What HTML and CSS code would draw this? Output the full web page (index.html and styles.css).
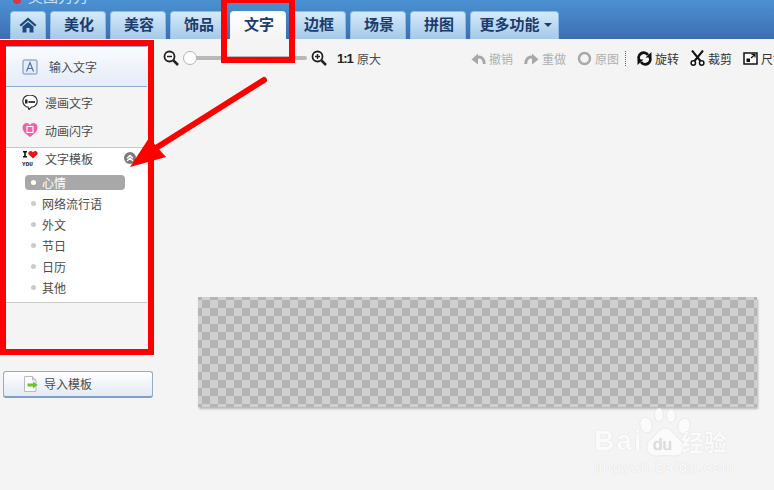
FILE: index.html
```html
<!DOCTYPE html>
<html lang="zh-CN">
<head>
    <meta charset="UTF-8">
    <title>美图秀秀</title>
    <link rel="stylesheet" href="styles.css">
</head>

<body>

<div class="app-container">
    <div class="header">
        <div class="app-title">
            <svg class="app-logo" width="10" height="4" viewBox="0 0 10 4"><circle cx="5" cy="0" r="4" fill="#d8344c"/></svg>
            <span class="app-name">美图秀秀</span>
        </div>
        <div class="tabs">
            <button class="tab tab-home">
                <svg width="18" height="16" viewBox="0 0 18 16"><path d="M9 0.5 0.5 8 2 9.5 9 3.5 16 9.500 17.500 8Z" fill="#1c4a7c"/><path d="M3.500 9.500 9 5l5.500 4.500V15.500H10.500V11h-3v4.500H3.500Z" fill="#1c4a7c"/></svg>
            </button>
            <button class="tab">美化</button>
            <button class="tab">美容</button>
            <button class="tab">饰品</button>
            <button class="tab active">文字</button>
            <button class="tab">边框</button>
            <button class="tab">场景</button>
            <button class="tab">拼图</button>
            <button class="tab tab-more">更多功能<i class="caret"></i></button>
        </div>
    </div>

    <div class="workspace">
        <div class="side">
            <div class="side-panel">
                <div class="side-main">
                    <svg width="16" height="16" viewBox="0 0 16 16"><rect x="1" y="1" width="14" height="14" rx="1" fill="#e6edf8" stroke="#6f8fc4"/><path d="M4.500 12.500 8 3.500l3.500 9M5.800 9.500h4.400" fill="none" stroke="#4a6fb0" stroke-width="1.100"/></svg>
                    <span>输入文字</span>
                </div>
                <div class="side-group">
                    <div class="side-item">
                        <svg width="16" height="16" viewBox="0 0 16 16"><path d="M8 1C3.800 1 .8 3.500 .8 7S3.800 13 6 13l1 2.500L9.500 13c3 0 5.700-2.500 5.700-6S12.200 1 8 1Z" fill="#fff" stroke="#333" stroke-width="1.200"/><rect x="3" y="5.500" width="2.500" height="4" fill="#222"/><rect x="6.500" y="7" width="6.500" height="2" fill="#444"/></svg>
                        <span>漫画文字</span>
                    </div>
                    <div class="side-item">
                        <svg width="16" height="16" viewBox="0 0 16 16"><path d="M8 15C4 12 .5 9.500 .5 5.500 .5 2.800 2.500 1 4.500 1 6 1 7.300 1.800 8 3 8.700 1.800 10 1 11.500 1c2 0 4 1.800 4 4.500C15.500 9.500 12 12 8 15Z" fill="#f45fa8"/><rect x="5" y="4.500" width="6" height="6" fill="none" stroke="#fff" stroke-width="1.100"/></svg>
                        <span>动画闪字</span>
                    </div>
                </div>
                <div class="side-group side-templates">
                    <div class="side-item side-head">
                        <svg width="16" height="16" viewBox="0 0 16 16"><rect x="1" y="0" width="4" height="1.500" fill="#111"/><rect x="2.200" y="0" width="1.600" height="6" fill="#111"/><rect x="1" y="5" width="4" height="1.500" fill="#111"/><path d="M11 7.500 6.800 3.400C5.600 1.800 7 0 8.500 0 9.700 0 10.500 .6 11 1.400 11.500 .6 12.300 0 13.500 0 15 0 16.400 1.800 15.200 3.400Z" fill="#e8141c"/><text x="0" y="15" class="you-text">YOU</text></svg>
                        <span>文字模板</span>
                        <i class="collapse">
                            <svg width="12" height="12" viewBox="0 0 12 12"><circle cx="6" cy="6" r="6" fill="#7b7b7b"/><path d="M3 6.200 6 3.400 9 6.200M3 9 6 6.200 9 9" fill="none" stroke="#fff" stroke-width="1.300"/></svg>
                        </i>
                    </div>
                    <ul class="template-list">
                        <li class="selected">心情</li>
                        <li>网络流行语</li>
                        <li>外文</li>
                        <li>节日</li>
                        <li>日历</li>
                        <li>其他</li>
                    </ul>
                </div>
            </div>
            <button class="import-btn">
                <svg width="16" height="16" viewBox="0 0 16 16"><path d="M1.500 .5H9.500L13 4V15.500H1.500Z" fill="#fafafa" stroke="#bbb"/><path d="M9.500 .5V4H13" fill="#ddd" stroke="#bbb"/><path d="M4.500 7.500H10V5.500L14.500 9 10 12.500V10.500H4.500Z" fill="#6cc22e"/></svg>
                <span>导入模板</span>
            </button>
        </div>

        <div class="main">
            <div class="toolbar">
                <div class="zoom-tools">
                    <svg width="16" height="16" viewBox="0 0 16 16"><circle cx="6.500" cy="6.500" r="5" fill="#fff" stroke="#222" stroke-width="1.800"/><path d="M4 6.500H9" stroke="#222" stroke-width="1.500"/><path d="M10.500 10.500 15 15" stroke="#222" stroke-width="2.500"/></svg>
                    <div class="slider"><i class="slider-knob"></i></div>
                    <svg width="16" height="16" viewBox="0 0 16 16"><circle cx="6.500" cy="6.500" r="5" fill="#fff" stroke="#222" stroke-width="1.800"/><path d="M4 6.500H9M6.500 4V9" stroke="#222" stroke-width="1.500"/><path d="M10.500 10.500 15 15" stroke="#222" stroke-width="2.500"/></svg>
                    <b class="one-to-one">1:1</b>
                    <span class="tool-text">原大</span>
                </div>
                <div class="edit-tools">
                    <div class="tool disabled">
                        <svg width="15" height="15" viewBox="0 0 15 15"><path d="M.5 8.500 7 2.500V13.500Z" fill="#a8a8a8"/><path d="M6 6.500C10.500 5 13.300 8 13.300 13" fill="none" stroke="#a8a8a8" stroke-width="3"/></svg>
                        <span>撤销</span>
                    </div>
                    <div class="tool disabled">
                        <svg width="15" height="15" viewBox="0 0 15 15"><path d="M14.500 8.500 8 2.500V13.500Z" fill="#a8a8a8"/><path d="M9 6.500C4.500 5 1.700 8 1.700 13" fill="none" stroke="#a8a8a8" stroke-width="3"/></svg>
                        <span>重做</span>
                    </div>
                    <div class="tool disabled">
                        <svg width="15" height="15" viewBox="0 0 15 15"><circle cx="7.500" cy="7.500" r="5.500" fill="none" stroke="#a8a8a8" stroke-width="2.500"/></svg>
                        <span>原图</span>
                    </div>
                    <i class="tool-sep"></i>
                    <div class="tool">
                        <svg width="15" height="15" viewBox="0 0 15 15"><path d="M2.500 9.500A5 5 0 0 1 11 4M12.500 5.500A5 5 0 0 1 4 11" fill="none" stroke="#111" stroke-width="2.800"/><path d="M8.500 6.500H14.500V1ZM6.500 8.500H.5V14Z" fill="#111"/></svg>
                        <span>旋转</span>
                    </div>
                    <div class="tool">
                        <svg width="15" height="16" viewBox="0 0 15 16"><path d="M2 .5 10.500 11M13 .5 4.500 11" stroke="#111" stroke-width="2"/><circle cx="3.300" cy="13" r="2.200" fill="#fff" stroke="#111" stroke-width="1.500"/><circle cx="11.700" cy="13" r="2.200" fill="#fff" stroke="#111" stroke-width="1.500"/></svg>
                        <span>裁剪</span>
                    </div>
                    <div class="tool">
                        <svg width="15" height="15" viewBox="0 0 15 15"><rect x="1" y="2" width="13" height="11" fill="#fff" stroke="#111" stroke-width="1.500"/><rect x="3.500" y="7.500" width="3.500" height="3.500" fill="#111"/><path d="M8 7 12 3.500M8.500 3.500H12V6.500" fill="none" stroke="#111" stroke-width="1.200"/></svg>
                        <span>尺寸</span>
                    </div>
                </div>
            </div>
            <div class="canvas-area">
                <div class="canvas"></div>
            </div>
        </div>
    </div>

    <!-- annotation marks drawn on top of the screenshot -->
    <svg class="marks" width="774" height="490" viewBox="0 0 774 490">
        <rect x="3" y="43" width="148" height="309" fill="none" stroke="#ff0000" stroke-width="6"/>
        <rect x="224" y="0" width="68" height="60" fill="none" stroke="#ff0000" stroke-width="6"/>
        <path d="M264 80 156 148" stroke="#ff0000" stroke-width="6" stroke-linecap="round"/>
        <path d="M130 167 149 138 166 157Z" fill="#ff0000"/>
    </svg>

    <div class="watermark">
        <svg class="paw" width="62" height="50" viewBox="0 0 62 50">
            <g fill="#fbfbfb" stroke="#e4e4e4" stroke-width="0.700">
                <ellipse cx="8" cy="17" rx="6" ry="8" transform="rotate(-15 8 17)"/>
                <ellipse cx="21" cy="7" rx="4.500" ry="6.500"/>
                <ellipse cx="33" cy="8" rx="4.500" ry="6.500"/>
                <ellipse cx="46" cy="18" rx="6" ry="8" transform="rotate(15 46 18)"/>
                <path d="M27 20C21 20 19 27 13 31 5 37 9 49 20 48 25 47.500 29 47.500 35 48 46 49 50 38 42 32 36 27 33 20 27 20Z"/>
            </g>
            <text x="15" y="42" class="paw-du">du</text>
        </svg>
        <div class="wm-row">
            <span class="wm-bai">Bai</span><span class="wm-cn">经验</span>
        </div>
        <div class="wm-url">jingyan.baidu.com</div>
    </div>
</div>

</body>

</html>
```

FILE: styles.css
```css
* {
    box-sizing: border-box;
}

html, body {
    margin: 0;
    height: 100%;
}

body {
    overflow: hidden;
    background-color: #f4f4f4;
}

button {
    font-family: inherit;
    padding: 0;
    cursor: default;
}

.app-container {
    position: relative;
    width: 774px;
    height: 490px;
    overflow: hidden;
    font-size: 12px;
    font-family: "Noto Sans CJK SC", "Liberation Sans", sans-serif;
    color: #4c4c4c;
}

/* header */
.header {
    height: 39px;
    background-image: linear-gradient(#4b92d2, #3e6db2);
}

.app-title {
    display: flex;
    height: 11px;
    padding-left: 12px;
    gap: 6px;
    overflow: hidden;
}

.app-logo {
    display: block;
}

.app-name {
    font-size: 15px;
    line-height: 6px;
    color: #cfe0f2;
    margin-top: -7px;
}

.tabs {
    display: flex;
    gap: 4px;
    padding-left: 10px;
}

.tab {
    display: flex;
    align-items: center;
    justify-content: center;
    width: 56px;
    height: 28px;
    padding: 0 0 4px 2px;
    border: 1px solid #8fbbe4;
    border-bottom: 0;
    border-radius: 4px 4px 0 0;
    background-image: linear-gradient(#d4eafa, #a4c9e8);
    color: #1b3c6e;
    font-size: 15px;
    font-weight: bold;
}

.tab.active {
    background-image: linear-gradient(#ffffff, #f4f4f4);
    border-color: #f4f4f4;
}

.tab-home {
    width: 36px;
    padding: 0 0 2px;
}

.tab-more {
    width: 89px;
}

.caret {
    width: 0;
    height: 0;
    margin-left: 4px;
    margin-top: 2px;
    border-left: 4px solid transparent;
    border-right: 4px solid transparent;
    border-top: 4px solid #1b3c6e;
}

/* left side */
.workspace {
    display: flex;
}

.side {
    width: 153px;
    padding-left: 3px;
    flex: none;
}

.side-panel {
    height: 317px;
    margin-left: -3px;
    padding: 7px 6px 0;
}

.side-main {
    display: flex;
    align-items: center;
    gap: 11px;
    height: 41px;
    padding-left: 16px;
    border-top: 1px solid #8cabd8;
    border-bottom: 1px solid #8cabd8;
    background-image: linear-gradient(#fafbfd, #e4ecf7);
}

.side-group {
    padding: 1px 0 3px;
    background-color: #f4f4f4;
}

.side-item {
    display: flex;
    align-items: center;
    gap: 7px;
    height: 28px;
    padding-left: 16px;
    font-size: 12px;
}

.side-templates {
    padding: 0;
    height: 156px;
    background-color: #ffffff;
    border-top: 1px solid #c8c8c8;
    border-bottom: 1px solid #c8c8c8;
}

.side-head {
    position: relative;
    height: 21px;
}

.you-text {
    font-size: 6px;
    font-family: "Liberation Mono", monospace;
    font-weight: bold;
    fill: #111;
}

.collapse {
    position: absolute;
    left: 118px;
    top: 4px;
    line-height: 0;
}

.template-list {
    list-style: none;
    margin: 6px 0 0;
    padding: 0;
}

.template-list li {
    position: relative;
    width: 100px;
    height: 15px;
    margin: 0 0 6px 19px;
    padding-left: 17px;
    line-height: 15px;
    border-radius: 4px;
}

.template-list li:before {
    content: "";
    position: absolute;
    left: 6px;
    top: 5px;
    width: 5px;
    height: 5px;
    border-radius: 50%;
    background-color: #cccccc;
}

.template-list li.selected {
    background-color: #a8a8a8;
    color: #ffffff;
}

.template-list li.selected:before {
    background-color: #ffffff;
}

.import-btn {
    display: flex;
    align-items: center;
    gap: 5px;
    width: 150px;
    height: 27px;
    margin-top: 15px;
    padding: 0 0 1px 19px;
    border: 1px solid #8eaccd;
    border-bottom: 2px solid #7f9fc4;
    border-radius: 3px;
    background-image: linear-gradient(#ffffff, #e2eaf5);
    color: #4c4c4c;
    font-size: 12px;
}

/* toolbar */
.main {
    flex: 1;
    min-width: 0;
}

.toolbar {
    display: flex;
    height: 40px;
    padding: 10px 0 0 10px;
    overflow: hidden;
}

.zoom-tools, .edit-tools, .tool {
    display: flex;
    align-items: center;
    height: 18px;
    flex: none;
}

.slider {
    position: relative;
    width: 122px;
    height: 4px;
    margin: 0 4px 0 6px;
    background-color: #b8b8b8;
    border-radius: 2px;
}

.slider-knob {
    position: absolute;
    left: -2px;
    top: -5px;
    width: 14px;
    height: 14px;
    border-radius: 50%;
    border: 1px solid #b4b4b4;
    background-color: #ffffff;
}

.one-to-one {
    width: 16px;
    margin-left: 10px;
    color: #222222;
    font-family: "Liberation Sans", sans-serif;
    font-size: 13px;
    letter-spacing: -1px;
}

.tool-text {
    margin-left: 4px;
}

.edit-tools {
    gap: 11px;
    margin-left: 90px;
}

.tool {
    gap: 3px;
    color: #333333;
}

.tool.disabled {
    color: #b0b0b0;
}

.tool-sep {
    height: 15px;
    margin-left: -5px;
    border-left: 1px dotted #666666;
}

/* canvas */
.canvas-area {
    padding: 218px 0 0 45px;
}

.canvas {
    width: 559px;
    height: 110px;
    background-image: repeating-conic-gradient(#b4b4b4 0 25%, #d0d0d0 0 50%);
    background-size: 16px 16px;
    background-position: -4px 3px;
    box-shadow: 1px 2px 2px #b8b8b8;
}

/* overlays */
.marks {
    position: absolute;
    left: 0;
    top: 0;
}

.watermark {
    position: absolute;
    left: 594px;
    top: 407px;
    width: 150px;
    color: #fbfbfb;
    font-family: "Liberation Sans", sans-serif;
    text-shadow: 0 0 1px #cfcfcf;
}

.paw {
    position: absolute;
    left: 44px;
    top: 1px;
}

.paw-du {
    font-size: 17px;
    font-family: "Liberation Sans", sans-serif;
    fill: #dcdcdc;
}

.wm-row {
    position: relative;
    display: flex;
    align-items: center;
    height: 30px;
    margin-top: 19px;
    font-weight: bold;
}

.wm-bai {
    width: 87px;
    font-size: 28px;
    letter-spacing: 2px;
}

.wm-cn {
    font-family: "Noto Sans CJK SC", sans-serif;
    font-size: 23px;
    line-height: 23px;
    white-space: nowrap;
}

.wm-url {
    position: relative;
    font-size: 15px;
    letter-spacing: 1.200px;
    margin-top: 2px;
}
```
